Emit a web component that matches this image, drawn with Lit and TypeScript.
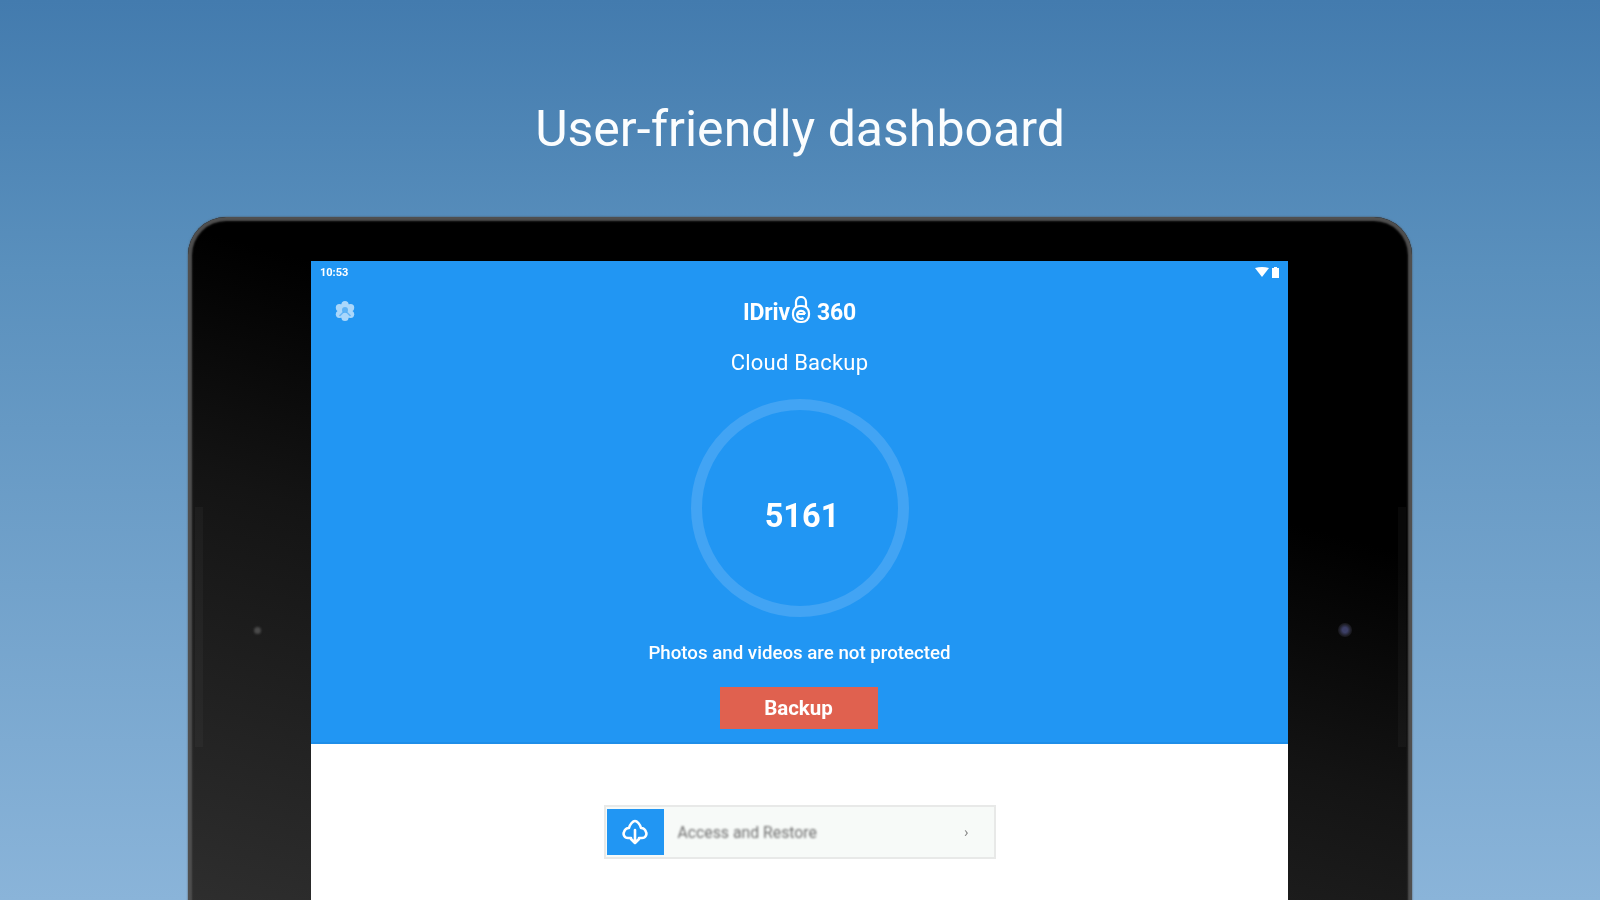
import { LitElement, html, css } from "lit";
import { customElement } from "lit/decorators.js";

@customElement("app-root")
export class AppRoot extends LitElement {
  static styles = css`
    :host { display: block; width: 1600px; height: 900px; overflow: hidden; font-family: Roboto, "Liberation Sans", sans-serif; }
    .page { height: 900px; box-sizing: border-box; padding-top: 100px; display: flex; flex-direction: column; align-items: center;
      background: linear-gradient(180deg, #437bae 0%, #5a90bd 30%, #8ab4d9 100%); overflow: hidden; }
    .title { font-size: 50px; line-height: 58px; color: #fbfdfe; font-weight: 400; filter: blur(.5px); }
    .device { position: relative; flex: none; margin-top: 59px; width: 1224px; height: 800px; box-sizing: border-box; padding: 44px 124px 0 123px;
      box-shadow: inset 0 0 2px 4px #4f4f4f, 0 0 2px #4f4f4f; border-radius: 38px 38px 0 0;
      background: linear-gradient(195deg, #000 30%, #141414 52%, #2e2e2e 90%); }
    .rail { position: absolute; top: 290px; width: 8px; height: 240px; background: rgba(255,255,255,.03); }
    .rail.l { left: 7px; }
    .rail.r { right: 6px; }
    .cam { position: absolute; border-radius: 50%; }
    .cam.l { left: 66px; top: 410px; width: 7px; height: 7px; background: #4a4a4a; filter: blur(1px); }
    .cam.r { right: 60px; top: 406px; width: 14px; height: 14px; background: radial-gradient(circle, #3c3f66 0 25%, #1d1d24 60%, #0c0c0c 100%); }
    .screen { height: 760px; background: #fff; display: flex; flex-direction: column; }
    .blue { height: 483px; flex: none; box-sizing: border-box; background: #2196f3; border-bottom: 2px solid #1e8ee8; color: #fff; display: flex; flex-direction: column; align-items: center; }
    .status { align-self: stretch; height: 22px; padding: 0 9px 0 9px; display: flex; justify-content: space-between; align-items: center; filter: blur(.7px); }
    .time { font-size: 11px; font-weight: 700; }
    .sys { display: flex; gap: 3px; align-items: center; }
    .head { align-self: stretch; display: flex; justify-content: center; position: relative; height: 30px; margin-top: 14px; align-items: center; }
    .gear { position: absolute; left: 23px; top: 3px; width: 22px; height: 22px; filter: blur(.7px); }
    .logo { display: flex; align-items: center; font-size: 23px; font-weight: 700; letter-spacing: -.2px; filter: blur(.75px); }
    .logo svg { margin: -4px 5px 0 0; }
    .sub { margin-top: 22px; font-size: 22px; line-height: 28px; letter-spacing: .2px; filter: blur(.75px); }
    .ring { margin-top: 22px; width: 218px; height: 218px; box-sizing: border-box; border: 11px solid #42a4f4; border-radius: 50%; display: flex; align-items: center; justify-content: center; filter: blur(.6px); }
    .num { font-size: 32.5px; font-weight: 700; margin: 15px 0 0 5px; }
    .note { margin-top: 23px; font-size: 18.7px; font-weight: 500; line-height: 26px; filter: blur(.75px); }
    .btn { margin-top: 21px; margin-right: 2px; width: 158px; height: 42px; background: #e0614f; display: flex; align-items: center; justify-content: center; font-size: 20.5px; font-weight: 700; }
    .btn span { filter: blur(.75px); }
    .white { flex: 1; display: flex; justify-content: center; padding-top: 61px; }
    .card { width: 392px; height: 54px; box-sizing: border-box; border: 2px solid #e8e9e8; padding: 2px 0 2px 1px; background: #f7faf8; display: flex; align-items: center; }
    .tile { width: 57px; height: 46px; flex: none; background: #2196f3; display: flex; align-items: center; justify-content: center; }
    .tile svg { filter: blur(.6px); }
    .label { flex: 1; margin-left: 14px; font-size: 15.8px; color: #6f6f6f; filter: blur(.8px); }
    .chev { margin-right: 25px; font-size: 15px; color: #888; filter: blur(.6px); }
  `;

  render() {
    return html`
      <div class="page">
        <div class="title">User-friendly dashboard</div>
        <div class="device">
          <div class="rail l"></div><div class="rail r"></div>
          <div class="cam l"></div><div class="cam r"></div>
          <div class="screen">
            <div class="blue">
              <div class="status">
                <span class="time">10:53</span>
                <span class="sys">
                  <svg width="14" height="10" viewBox="0 0 14 10"><path d="M0 1 Q7 -1 14 1 L7 10Z" fill="#fff"/></svg>
                  <svg width="7" height="11" viewBox="0 0 7 11"><path d="M2 0h3v1h2v10H0V1h2z" fill="#fff"/></svg>
                </span>
              </div>
              <div class="head">
                <svg class="gear" viewBox="0 0 22 22">
                  <g opacity=".62" fill="#fff">
                    <circle cx="11" cy="11" r="7.5"/>
                    <circle cx="11" cy="4.5" r="3.6"/><circle cx="16.6" cy="7.7" r="3.6"/><circle cx="16.6" cy="14.3" r="3.6"/>
                    <circle cx="11" cy="17.5" r="3.6"/><circle cx="5.4" cy="14.3" r="3.6"/><circle cx="5.4" cy="7.7" r="3.6"/>
                  </g>
                  <circle cx="11" cy="10" r="3" fill="#2196f3" fill-opacity=".55"/>
                  <path d="M5.5 16l4-4M16.5 16l-4-4" stroke="#2196f3" stroke-opacity=".5" stroke-width="1.5"/>
                </svg>
                <div class="logo">
                  <span>IDriv</span>
                  <svg width="22" height="28" viewBox="0 0 22 28" fill="none" stroke="#fff" stroke-width="2.2">
                    <path d="M6 11V6a5 5 0 0 1 10 0v5"/>
                    <rect x="3" y="10" width="16" height="16" rx="7"/>
                    <path d="M7 18h8M15 18a4 4 0 1 0-1.5 4"/>
                  </svg>
                  <span>360</span>
                </div>
              </div>
              <div class="sub">Cloud Backup</div>
              <div class="ring"><span class="num">5161</span></div>
              <div class="note">Photos and videos are not protected</div>
              <div class="btn"><span>Backup</span></div>
            </div>
            <div class="white">
              <div class="card">
                <div class="tile">
                  <svg width="28" height="28" viewBox="0 0 28 28" fill="none" stroke="#fff" stroke-width="2.6" stroke-linejoin="round" stroke-linecap="round">
                    <path d="M10 20H7C3 20 2 16 3 14C4 11 6 10 8 10C9 6 12 3 14 3C16 3 19 6 20 10C22 10 24 11 25 14C26 16 25 20 21 20H18"/>
                    <path d="M14 12V25M10 21L14 25L18 21"/>
                  </svg>
                </div>
                <div class="label">Access and Restore</div>
                <div class="chev">›</div>
              </div>
            </div>
          </div>
        </div>
      </div>
    `;
  }
}
